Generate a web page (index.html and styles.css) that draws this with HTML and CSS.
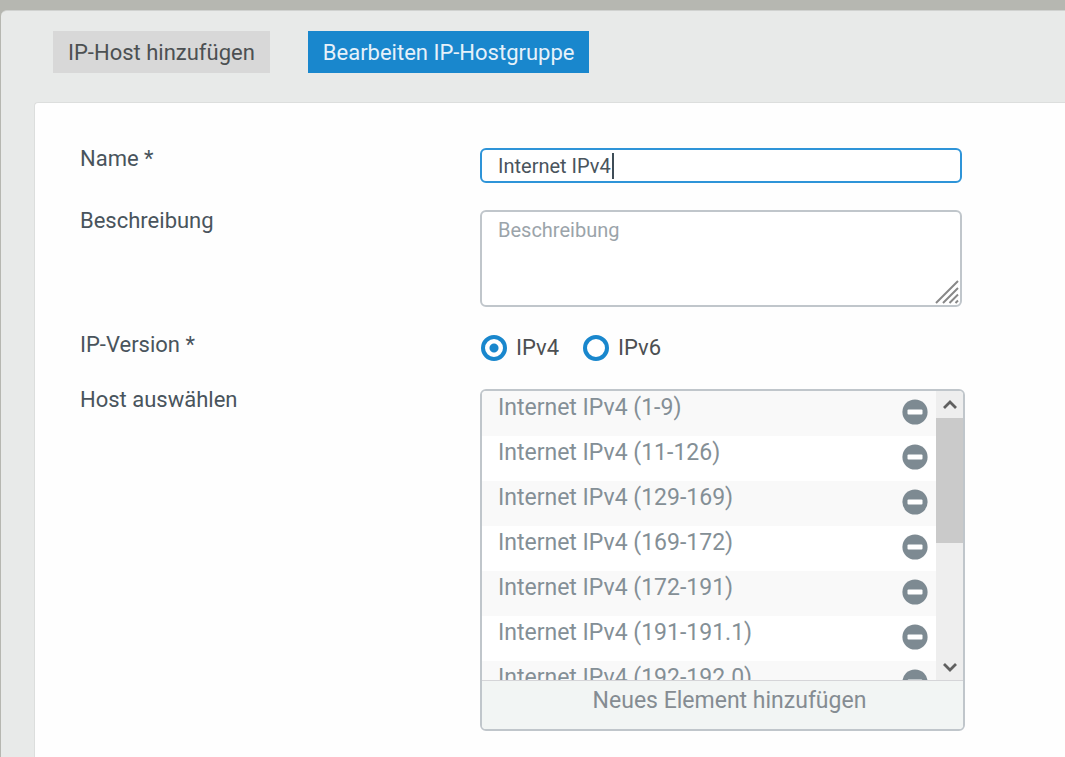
FILE: index.html
```html
<!DOCTYPE html>
<html lang="de">
<head>
<meta charset="utf-8">
<title>Bearbeiten IP-Hostgruppe</title>
<link rel="stylesheet" href="styles.css">
</head>
<body>
<svg class="defs" aria-hidden="true">
  <symbol id="minus" viewBox="0 0 26 26"><circle cx="13" cy="13" r="12.6" fill="#7d8a92"/><rect x="5.5" y="10.5" width="15" height="5" rx="1" fill="#fff"/></symbol>
</svg>
<main class="panel">
  <nav class="tabs">
    <button class="tab" type="button">IP-Host hinzufügen</button>
    <button class="tab tab-active" type="button">Bearbeiten IP-Hostgruppe</button>
  </nav>
  <form class="card">
    <div class="row">
      <label class="label" for="name">Name *</label>
      <div class="field">
        <input class="control name" id="name" type="text" value="Internet IPv4">
        <span class="caret"></span>
      </div>
    </div>
    <div class="row">
      <label class="label" for="desc">Beschreibung</label>
      <div class="field">
        <textarea class="control desc" id="desc" placeholder="Beschreibung"></textarea>
        <svg class="grip" viewBox="0 0 24 24" aria-hidden="true"><path d="M1 23 23 1M8 23 23 8M14.500 23 23 14.500M20.500 23 23 20.500" stroke="#888" stroke-width="2" fill="none"/></svg>
      </div>
    </div>
    <div class="row" role="radiogroup" aria-labelledby="version">
      <span class="label" id="version">IP-Version *</span>
      <div class="radios">
        <label class="choice"><input class="radio" type="radio" name="version" checked>IPv4</label>
        <label class="choice"><input class="radio" type="radio" name="version">IPv6</label>
      </div>
    </div>
    <div class="row">
      <span class="label" id="hosts">Host auswählen</span>
      <div class="picker">
        <div class="view">
          <ul class="list" aria-labelledby="hosts">
            <li class="item">Internet IPv4 (1-9)<button class="remove" type="button" aria-label="Entfernen"><svg class="icon"><use href="#minus"/></svg></button></li>
            <li class="item">Internet IPv4 (11-126)<button class="remove" type="button" aria-label="Entfernen"><svg class="icon"><use href="#minus"/></svg></button></li>
            <li class="item">Internet IPv4 (129-169)<button class="remove" type="button" aria-label="Entfernen"><svg class="icon"><use href="#minus"/></svg></button></li>
            <li class="item">Internet IPv4 (169-172)<button class="remove" type="button" aria-label="Entfernen"><svg class="icon"><use href="#minus"/></svg></button></li>
            <li class="item">Internet IPv4 (172-191)<button class="remove" type="button" aria-label="Entfernen"><svg class="icon"><use href="#minus"/></svg></button></li>
            <li class="item">Internet IPv4 (191-191.1)<button class="remove" type="button" aria-label="Entfernen"><svg class="icon"><use href="#minus"/></svg></button></li>
            <li class="item">Internet IPv4 (192-192.0)<button class="remove" type="button" aria-label="Entfernen"><svg class="icon"><use href="#minus"/></svg></button></li>
          </ul>
          <div class="scroll">
            <button class="arrow" type="button" aria-label="Nach oben"><svg class="chevron" viewBox="0 0 14 12"><path d="M1 9 7 3l6 6" fill="none" stroke="#606060" stroke-width="2.800"/></svg></button>
            <div class="track"><div class="thumb"></div></div>
            <button class="arrow" type="button" aria-label="Nach unten"><svg class="chevron" viewBox="0 0 14 12"><path d="m1 3 6 6 6-6" fill="none" stroke="#606060" stroke-width="2.800"/></svg></button>
          </div>
        </div>
        <button class="add" type="button">Neues Element hinzufügen</button>
      </div>
    </div>
  </form>
</main>
</body>
</html>
```
FILE: styles.css
```css
* { box-sizing: border-box; }
body {
  margin: 0;
  min-height: 100vh;
  display: flex;
  padding: 10px 0 0 1px;
  overflow: hidden;
  background: #b6b7b1;
  color: #49545c;
  font: 22px/22px Roboto, "Liberation Sans", sans-serif;
}
button, input, textarea { margin: 0; font: inherit; color: inherit; }
button { padding: 0; border: 0; background: none; }
.defs { position: absolute; width: 0; height: 0; }
.panel {
  flex: 1;
  display: flex;
  flex-direction: column;
  padding: 20px 0 0 33px;
  border-top: 1px solid #d0d2d0;
  border-radius: 6px 0 0 0;
  background: #e8eae9;
}
.tabs { display: flex; gap: 38px; padding-left: 19px; }
.tab { height: 42px; padding: 2px 15px 0; background: #d8d8d8; color: #4c5052; }
.tab-active { background: #1987cd; color: #e6f1fa; }
.card {
  flex: 1;
  display: flex;
  flex-direction: column;
  margin-top: 29px;
  padding: 45px 24px 26px 45px;
  border: solid #dcdedd;
  border-width: 1px 0 0 1px;
  border-radius: 4px 0 0 0;
  background: #fefefe;
}
.row { display: grid; grid-template-columns: 400px minmax(0, 485px); margin-bottom: 27px; }
.row:nth-child(3) { margin-bottom: 28px; }
.row:last-child { margin-bottom: 0; }
.label { align-self: start; }
.field { position: relative; display: flex; margin-right: 3px; }
.control {
  width: 100%;
  padding: 0 16px;
  border: 2px solid #c0c6cb;
  border-radius: 6px;
  outline: 0;
  background: #fff;
  font-size: 20px;
}
.name { height: 35px; border-color: #2e94d8; }
.caret { position: absolute; left: 132px; top: 5px; width: 2px; height: 26px; background: #3f4d57; }
.desc { height: 97px; padding-top: 7px; resize: none; }
.desc::placeholder { color: #9ba4aa; opacity: 1; }
.grip { position: absolute; right: 3px; bottom: 3px; width: 24px; height: 24px; }
.radios { display: flex; gap: 24px; padding-left: 1px; }
.choice { display: flex; align-items: center; gap: 9px; line-height: 27px; color: #4c4f52; font-size: 22px; }
.radio {
  appearance: none;
  width: 26px;
  height: 26px;
  margin: 0;
  border: 4px solid #1987cd;
  border-radius: 50%;
  background: #fff;
}
.radio:checked { background: radial-gradient(circle, #1987cd 4px, #fff 5px); }
.picker {
  overflow: hidden;
  border: 2px solid #c0c6cb;
  border-radius: 6px;
  background: #fff;
}
.view { display: flex; height: 289px; }
.list { flex: 1; margin: 0; padding: 0; overflow: hidden; list-style: none; color: #848f96; font-size: 23px; }
.item {
  display: flex;
  justify-content: space-between;
  height: 45px;
  padding: 6px 8px 0 16px;
}
.item:nth-child(odd) { background: #f9f9f9; }
.remove { height: 26px; margin-top: 2px; }
.icon { display: block; width: 26px; height: 26px; }
.scroll { display: flex; flex-direction: column; width: 27px; background: #eee; }
.arrow { display: grid; place-items: center; height: 27px; }
.chevron { width: 14px; height: 12px; }
.track { flex: 1; }
.thumb { height: 53%; background: #cacaca; }
.add {
  display: block;
  width: 100%;
  height: 49px;
  padding: 0 0 8px 14px;
  border-top: 1px solid #d5d5d8;
  background: #f2f5f4;
  color: #858c92;
  font-size: 23px;
}
```
